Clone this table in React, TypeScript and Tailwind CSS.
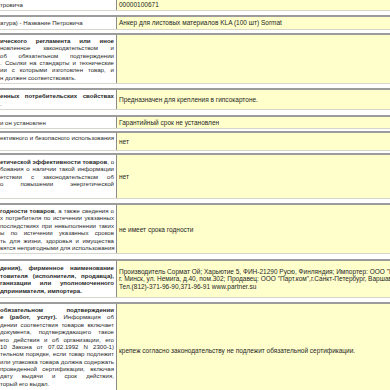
import React from "react";

type Line = { t: React.ReactNode; j?: boolean; b?: boolean };

const L = (t: React.ReactNode, j = true, b = false): Line => ({ t, j, b });

function Row({
  mt,
  py,
  left,
  right,
  last,
}: {
  mt: string;
  py: string;
  left: Line[];
  right: React.ReactNode;
  last?: boolean;
}) {
  return (
    <div
      className={`${mt} flex border-t-2 border-t-[#9c9c9c] ${
        last ? "border-b-4 border-b-[#a4a4a4]" : "border-b border-b-[#d6d6cc]"
      }`}
    >
      <div className={`w-[117px] shrink-0 overflow-hidden bg-white border-r border-r-[#8a8a8a] pr-[2px] ${py} flex flex-col justify-center text-[6.1px]`}>
        {left.map((l, i) => (
          <div
            key={i}
            className={`h-[7.4px] leading-[7.4px] whitespace-nowrap ${
              l.j ? "text-justify [text-align-last:justify]" : "text-left"
            } ${l.b ? "font-bold" : ""}`}
          >
            {l.t}
          </div>
        ))}
      </div>
      <div className="flex-1 min-w-0 overflow-hidden bg-[#ffffcc] pl-[2px] flex flex-col justify-center leading-[7.4px] whitespace-nowrap">
        {right}
      </div>
    </div>
  );
}

export default function App() {
  return (
    <div className="w-[390px] h-[390px] overflow-hidden bg-white text-[6.5px] text-[#262626] font-['Liberation_Sans',Arial,sans-serif]">
      <Row mt="-mt-[3px]" py="py-[2px]" left={[L("тровича", false)]} right="00000100671" />
      <Row mt="mt-[4px]" py="py-[2px]" left={[L("атура) - Название Петровича", false)]} right="Анкер для листовых материалов KLA (100 шт) Sormat" />
      <Row
        mt="mt-[3px]"
        py="py-[2px]"
        left={[
          L("ического регламента или иное", true, true),
          L("новленное законодательством и"),
          L("об обязательном подтверждении"),
          L(". Ссылки на стандарты и технические"),
          L("ии с которыми изготовлен товар, и"),
          L("н должен соответствовать.", false),
        ]}
        right=""
      />
      <Row
        mt="mt-[4px]"
        py="py-[2px]"
        left={[L("енных потребительских свойствах", true, true), L(".", false)]}
        right="Предназначен для крепления в гипсокартоне."
      />
      <Row mt="mt-[5px]" py="py-[2px]" left={[L("и он установлен", false)]} right="Гарантийный срок не установлен" />
      <Row
        mt="mt-[2px]"
        py="py-[1px]"
        left={[L("ективного и безопасного использования"), L("\u00a0", false)]}
        right="нет"
      />
      <Row
        mt="mt-[2px]"
        py="py-[3px]"
        left={[
          L(
            <>
              <b>етической эффективности товаров</b>, о
            </>
          ),
          L("бования о наличии такой информации"),
          L("етствии с законодательством об"),
          L("о повышении энергетической"),
          L("\u00a0", false),
        ]}
        right="нет"
      />
      <Row
        mt="mt-[4px]"
        py="py-[2px]"
        left={[
          L(
            <>
              <b>годности товаров</b>, а также сведения о
            </>
          ),
          L("х потребителя по истечении указанных"),
          L("последствиях при невыполнении таких"),
          L("ы по истечении указанных сроков"),
          L("ть для жизни, здоровья и имущества"),
          L("вятся непригодными для использования"),
        ]}
        right="не имеет срока годности"
      />
      <Row
        mt="mt-[5px]"
        py="py-[3px]"
        left={[
          L("дения), фирменное наименование", true, true),
          L("товителя (исполнителя, продавца),", true, true),
          L("ганизации или уполномоченного", true, true),
          L("дпринимателя, импортера.", false, true),
        ]}
        right={
          <>
            <div>Производитель Сормат Ой; Харьютие 5, ФИН-21290 Русю, Финляндия; Импортер: ООО "ГЛОБАЛ</div>
            <div>г. Минск, ул. Немига, д.40, пом.302; Продавец: ООО "Парт.ком",г.Санкт-Петербург, Варшавское</div>
            <div>Тел.(812)-371-96-90,371-96-91 www.partner.su</div>
          </>
        }
      />
      <Row
        mt="mt-[4px]"
        py="py-[2px]"
        last
        left={[
          L("обязательном подтверждении", true, true),
          L(
            <>
              <b>е (работ, услуг).</b> Информация об
            </>
          ),
          L("дении соответствия товаров включает"),
          L("документа, подтверждающего такое"),
          L("его действия и об организации, его"),
          L("10 Закона от 07.02.1992 N 2300-1)"),
          L("тельном порядке, если товар подлежит"),
          L("или упаковка товара должна содержать"),
          L("проведенной сертификации, включая"),
          L("дату выдачи и срок действия,"),
          L("торый его выдал.", false),
          L("\u00a0", false),
        ]}
        right="крепеж согласно законодательству не подлежит обязательной сертификации."
      />
    </div>
  );
}
